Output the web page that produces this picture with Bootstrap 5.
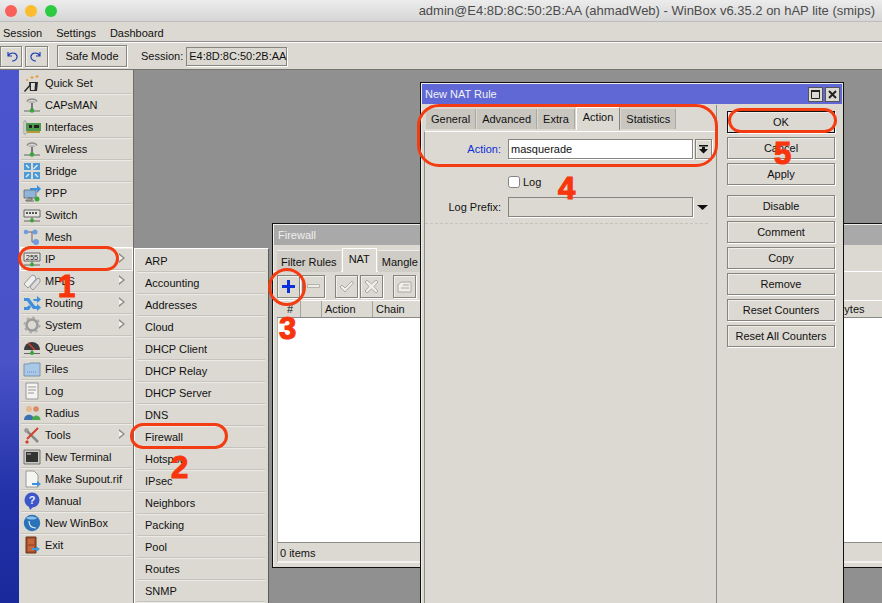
<!DOCTYPE html>
<html lang="en">
<head>
<meta charset="UTF-8">
<meta name="viewport" content="width=device-width, initial-scale=1.0">
<title>WinBox</title>
<link href="https://cdn.jsdelivr.net/npm/bootstrap@5.3.0/dist/css/bootstrap.min.css" rel="stylesheet">
<style>
html, body { height: 603px; overflow: hidden; }
body { width: 882px; background: #dcd9d2; color: #111; font: 11px/14px "Liberation Sans", Arial, sans-serif; position: relative; }

/* mac title bar */
.mac-bar { height: 22px; background: linear-gradient(#ececec, #d6d6d6); border-bottom: 1px solid #bdbdbd; padding: 0 7px 0 5px; }
.mac-dot { width: 12px; height: 12px; border-radius: 50%; margin-right: 8px; }
.mac-title { font-size: 13px; color: #4b4b4b; margin-left: auto; line-height: 21px; white-space: nowrap; }

/* winbox menu + toolbar */
.wb-menu { height: 19px; padding-left: 3px; gap: 14px; line-height: 22px; border-bottom: 1px solid #8e8e8e; box-sizing: content-box; }
.wb-tools { height: 28px; border-top: 1px solid #fff; border-bottom: 1px solid #77756f; }
.wb-btn { display: flex; align-items: center; justify-content: center; background: #dcd9d2; border: 1px solid #85847f; box-shadow: 1px 1px 0 #fff, inset 1px 1px 0 #efeee9; color: #111; font-size: 11px; line-height: 14px; padding: 0; border-radius: 0; }
.wb-btn:hover { background: #dcd9d2; border-color: #85847f; color: #111; }
.tool-undo { width: 22px; height: 21px; margin-left: 0; }
.tool-redo { width: 23px; height: 21px; margin-left: 3px; }
.tool-safe { width: 70px; height: 22px; margin-left: 9px; }
.sess-label { margin-left: 14px; margin-right: 3px; }
.sess-value { width: 101px; height: 19px; border: 1px solid #85847f; box-shadow: 1px 1px 0 #fff; padding-left: 2px; line-height: 17px; }

/* left side */
.wb-main { height: 533px; }
.wb-strip { width: 19px; background: linear-gradient(#4c54ce, #4a52c8 55%, #2231a8 80%, #1a2a9c); }
.wb-side { width: 115px; padding: 2px 1px 0 2px; border-right: 1px solid #6f6e6a; }
.wb-row { height: 22px; display: flex; align-items: center; background: transparent; border: 0; border-bottom: 1px solid #c6c3bc; box-shadow: 0 1px 0 #eceae5; padding: 0; position: relative; color: #111; font-size: 11px; border-radius: 0; }
.wb-row svg { width: 18px; height: 18px; margin: 0 4px 0 2px; flex: none; }
.row-on { outline: 1px solid #fff; outline-offset: 0; }
.sub-arrow { position: absolute; right: 7px; top: 5px; width: 0; height: 0; border-left: 6px solid #8b8a85; border-top: 5.5px solid transparent; border-bottom: 5.5px solid transparent; }
.sub-arrow::after { content: ""; position: absolute; left: -6px; top: -3.5px; width: 0; height: 0; border-left: 4px solid #f4f3ef; border-top: 3.5px solid transparent; border-bottom: 3.5px solid transparent; }
.wb-desk { background: #909090; position: relative; overflow: hidden; }

/* ip submenu */
.sub-menu { position: absolute; left: 0; top: 178px; width: 135px; height: 360px; background: #dcd9d2; border-top: 1px solid #fff; border-left: 1px solid #fff; border-right: 1px solid #5d5c58; padding: 1px 3px 0 2px; }
.sub-menu .wb-row { padding-left: 8px; }

/* windows */
.win { position: absolute; background: #dcd9d2; border: 1px solid #111; box-shadow: inset 1px 1px 0 #efeee9; }
.win-fw { left: 138px; top: 153px; width: 650px; height: 345px; }
.win-fw .win-title { height: 20px; margin: 1px; background: #a9a9a9; color: #efefef; padding-left: 4px; line-height: 20px; }
.fw-tabs { padding: 2px 0 0 4px; height: 25px; }
.fw-tab { height: 22px; margin-top: 2px; margin-right: 1px; padding: 0 4px; line-height: 23px; background: #cfccc5; border-top: 1px solid #eeede8; white-space: nowrap; }
.fw-tab.tab-on { height: 24px; margin-top: 0; background: #dcd9d2; border: 1px solid #fff; border-bottom: 0; padding: 0 6px; line-height: 21px; }
.fw-tool { padding: 3px 0 0 4px; height: 29px; border-top: 1px solid #fff; }
.fw-btn { width: 23px; height: 23px; margin-right: 2px; }
.fw-head { height: 18px; margin-left: 4px; border-top: 1px solid #fff; border-bottom: 1px solid #888; }
.fw-col { border-right: 1px solid #a5a39d; padding-left: 3px; line-height: 17px; flex: none; }
.fw-body { margin-left: 4px; height: 225px; background: #fff; border-left: 1px solid #b8b6b0; border-bottom: 1px solid #8e8d89; }
.fw-foot { margin-left: 4px; padding: 3px 2px; height: 20px; line-height: 14px; border-left: 1px solid #b8b6b0; border-bottom: 2px solid #f2f1ed; }

.win-nat { left: 286px; top: 12px; width: 424px; height: 540px; z-index: 2; }
.nat-title { height: 20px; margin: 1px; background: #5f68d4; color: #f2f2f2; padding-left: 3px; line-height: 21px; font-size: 11px; }
.nat-ctl { width: 15px; height: 15px; margin-right: 2px; background: #dcd9d2; border: 1px solid #555; display: flex; align-items: center; justify-content: center; }
.nat-left { width: 296px; padding: 2px 0 0 3px; border-right: 1px solid #8e8d89; }
.nat-tabs { padding-left: 2px; height: 24px; }
.nat-tab { height: 20px; margin-top: 2px; margin-right: 1px; padding: 0 5px; line-height: 21px; background: #c9c6bf; border-right: 1px solid #aaa8a2; white-space: nowrap; }
.nat-tab.tab-on { height: 23px; margin-top: 0; background: #dcd9d2; border: 1px solid #fff; border-right-color: #85847f; border-bottom: 0; padding: 0 6px; line-height: 19px; }
.nat-panel { border-top: 1px solid #fff; border-left: 1px solid #8e8d89; height: 500px; padding: 7px 0 0 0; }
.nat-line { height: 20px; align-items: center; }
.nat-label { width: 76px; text-align: right; margin-right: 7px; flex: none; }
.nat-field { width: 185px; height: 20px; background: #fff; border: 1px solid #85847f; box-shadow: 1px 1px 0 #fff; padding: 0 2px; line-height: 18px; font-size: 11px; }
.nat-off { background: #dcd9d2; }
.nat-drop { width: 17px; height: 20px; margin-left: 2px; }
.nat-check { width: 12px; height: 12px; margin: 0 3px 0 0; background: #fff; border: 1px solid #85847f; border-radius: 0; }
.nat-dash { border-top: 1px dashed #c4c2bb; margin: 6px 8px 0 0; }
.nat-right { width: 108px; margin-left: 10px; padding-top: 6px; gap: 4px; }
.nat-right .wb-btn { height: 22px; width: 108px; }
.btn-main { border: 1px solid #111 !important; }
.btn-gap { margin-top: 6px; }

/* red hand-drawn marks */
.mark-ring { position: absolute; border: 3px solid #f43c12; z-index: 5; pointer-events: none; }
.mark-num { position: absolute; z-index: 6; color: #f8360d; font: 900 31px/31px "Liberation Sans", Arial, sans-serif; -webkit-text-stroke: 1.2px #f8360d; }
</style>
</head>
<body>

<svg width="0" height="0" class="position-absolute">
  <symbol id="i-wand" viewBox="0 0 18 18"><path d="M1 17 8 9l1 1-7 8z" fill="#222"/><path d="M6 8h9l-1 9H7z" fill="#2b2b2b"/><path d="M8 9h4l-.5 7H8z" fill="#ddd"/><path d="M9 2v3M7.500 3.500h3M14 1v3M12.500 2.500h3M4 5v2M3 6h2" stroke="#e8962a" stroke-width="1"/></symbol>
  <symbol id="i-ant" viewBox="0 0 18 18"><path d="M4 5.500C5.500 2 12.500 2 14 5.500" fill="none" stroke="#8e8e8e" stroke-width="1.500"/><path d="M6 7c1-1.500 5-1.500 6 0" fill="none" stroke="#aaa" stroke-width="1.200"/><path d="M9 7v7" stroke="#777" stroke-width="2"/><path d="M1 15h16" stroke="#666"/><circle cx="9" cy="14.500" r="2.200" fill="#3aa63a"/></symbol>
  <symbol id="i-card" viewBox="0 0 18 18"><path d="M1 3h2v13H1z" fill="#eee" stroke="#888" stroke-width=".7"/><path d="M3 5h15v8H3z" fill="#4f9a4f"/><path d="M6 7h3v3H6zM11 7h5v3h-5z" fill="#222"/><path d="M4 13h13v2H4z" fill="#b89a3a"/></symbol>
  <symbol id="i-bridge" viewBox="0 0 18 18"><g fill="#4d9ad8"><path d="M1 1h7v7H1z"/><path d="M10 1h7v7h-7z"/><path d="M1 10h7v7H1z"/><path d="M10 10h7v7h-7z"/></g><g stroke="#e8f2fb" stroke-width="1.300" fill="none"><path d="M3 3l3 3M10.500 7l4-4M3 15l3-3M15 15l-3-3"/></g></symbol>
  <symbol id="i-ppp" viewBox="0 0 18 18"><path d="M1 6h12v8H1z" fill="#8fb6d9" stroke="#666" stroke-width=".8"/><path d="M5 14h4v2H3v1h8" stroke="#666" fill="none"/><path d="M7 4h7V1l4 4-4 4V6H7z" fill="#3f8fdc"/><circle cx="14" cy="15" r="2.500" fill="#3aa63a"/></symbol>
  <symbol id="i-switch" viewBox="0 0 18 18"><path d="M1 4h16v7H1z" fill="#e6e5e0" stroke="#666"/><path d="M3 6h2v2H3zM6 6h2v2H6zM9 6h2v2H9zM12 6h2v2h-2z" fill="#555"/><path d="M9 11v3M1 15h16" stroke="#666"/><circle cx="9" cy="14.500" r="2" fill="#3aa63a"/></symbol>
  <symbol id="i-mesh" viewBox="0 0 18 18"><path d="M3 4h9M9 4v10h3" stroke="#666" fill="none"/><circle cx="3" cy="4" r="2.300" fill="#6f9ce0"/><circle cx="12" cy="4" r="2.500" fill="#6f9ce0"/><circle cx="13" cy="14" r="3" fill="#6f9ce0"/></symbol>
  <symbol id="i-ip" viewBox="0 0 18 18"><path d="M1 3h16v8H1z" fill="#e6e5e0" stroke="#666"/><text x="9" y="10" font-size="7.500" text-anchor="middle" font-family="Liberation Sans" fill="#222">255</text><path d="M9 11v3M1 15h16" stroke="#666"/><circle cx="9" cy="14.500" r="2" fill="#3aa63a"/></symbol>
  <symbol id="i-tags" viewBox="0 0 18 18"><path d="M1 12 9 3l3 1 1 3-8 9z" fill="#eee" stroke="#999"/><path d="M7 15l8-9 2 1v3l-7 8z" fill="#ddd" stroke="#999"/></symbol>
  <symbol id="i-route" viewBox="0 0 18 18"><path d="M1 4h5l6 8h2v-2l4 3.500-4 3.500v-2h-4L4 7H1zM1 16v-3h3l2-2 2 2-2 3zM10 5h4V2l4 3.500L14 9V7h-3z" fill="#3f8fdc"/></symbol>
  <symbol id="i-gear" viewBox="0 0 18 18"><circle cx="9" cy="9" r="5.500" fill="none" stroke="#9a9a9a" stroke-width="2.500"/><circle cx="9" cy="9" r="7.500" fill="none" stroke="#aaa" stroke-width="2" stroke-dasharray="2.500 3.400"/></symbol>
  <symbol id="i-gauge" viewBox="0 0 18 18"><path d="M1 12a8 8 0 0 1 16 0z" fill="#3b3b3b"/><path d="M5 5l7 7" stroke="#e04030" stroke-width="1.200"/><path d="M9 12v3M1 15.500h16" stroke="#666"/><circle cx="9" cy="15" r="2" fill="#3aa63a"/></symbol>
  <symbol id="i-folder" viewBox="0 0 18 18"><path d="M1 4h5l1-1h10v13H1z" fill="#a7c8e6" stroke="#7b93a8"/><path d="M4 12h10" stroke="#7d82d8" stroke-dasharray="1 1"/></symbol>
  <symbol id="i-log" viewBox="0 0 18 18"><path d="M3 1h12v16H3z" fill="#f4f3ef" stroke="#999"/><path d="M5 5h8M5 8h8M5 11h6" stroke="#999"/></symbol>
  <symbol id="i-users" viewBox="0 0 18 18"><circle cx="6" cy="5" r="3" fill="#e8b890"/><path d="M1 16c0-7 10-7 10 0z" fill="#3f6fb0"/><circle cx="13" cy="5" r="2.800" fill="#d98a60"/><path d="M9 16c0-6 8.500-6 8.500 0z" fill="#4aa84a"/></symbol>
  <symbol id="i-tools" viewBox="0 0 18 18"><path d="M2 3l13 13" stroke="#888" stroke-width="2.500"/><path d="M15 2 4 13" stroke="#d44030" stroke-width="2"/><path d="M5 15l-2 2" stroke="#d44030" stroke-width="3"/><path d="M1 5l3-3 2 2-3 3z" fill="#999"/></symbol>
  <symbol id="i-term" viewBox="0 0 18 18"><path d="M1 2h16v14H1z" fill="#c9c8c3" stroke="#777"/><path d="M3 4h12v10H3z" fill="#333"/><path d="M4 6h4" stroke="#ccc"/></symbol>
  <symbol id="i-doc" viewBox="0 0 18 18"><path d="M3 1h8l4 4v12H3z" fill="#f5f5f2" stroke="#999"/><path d="M9 13h5v-2l4 3-4 3v-2H9z" fill="#3f8fdc"/></symbol>
  <symbol id="i-help" viewBox="0 0 18 18"><circle cx="9" cy="8" r="7.500" fill="#3c55c8"/><path d="M6 15l1 3 3-3z" fill="#3c55c8"/><text x="9" y="12" font-size="11" font-weight="700" text-anchor="middle" font-family="Liberation Sans" fill="#e8ecff">?</text></symbol>
  <symbol id="i-globe" viewBox="0 0 18 18"><circle cx="9" cy="9" r="8.200" fill="#2c72b8"/><path d="M3 4c3-2 8-2 11 0-2 2-8 2-11 0z" fill="#8cc0e8"/><path d="M6 7c0 5 3 7 7 7" fill="none" stroke="#dceaf6" stroke-width="1.200"/></symbol>
  <symbol id="i-door" viewBox="0 0 18 18"><path d="M3 1h10v16H3z" fill="#a8512e" stroke="#6e3016"/><path d="M5 3h6v5H5zM5 10h6v5H5z" fill="#c4673c"/><path d="M9 12h4v-2l4 3-4 3v-2H9z" fill="#3f9be0"/></symbol>
</svg>

<div class="mac-bar d-flex align-items-center">
  <span class="mac-dot" style="background:#f9605a"></span>
  <span class="mac-dot" style="background:#fbbc2e"></span>
  <span class="mac-dot" style="background:#2ccb41"></span>
  <span class="mac-title">admin@E4:8D:8C:50:2B:AA (ahmadWeb) - WinBox v6.35.2 on hAP lite (smips)</span>
</div>

<div class="wb-menu d-flex">
  <span>Session</span><span>Settings</span><span>Dashboard</span>
</div>

<div class="wb-tools d-flex align-items-center">
  <button class="btn wb-btn tool-undo"><svg width="13" height="12" viewBox="0 0 13 12"><path d="M3 2v4h4M3 6c2-4 8-4 9 0 .5 3-2 5-5 5" fill="none" stroke="#1d3fb0" stroke-width="1.200"/></svg></button>
  <button class="btn wb-btn tool-redo"><svg width="13" height="12" viewBox="0 0 13 12"><path d="M10 2v4H6M10 6C8 2 2 2 1 6c-.5 3 2 5 5 5" fill="none" stroke="#1d3fb0" stroke-width="1.200"/></svg></button>
  <button class="btn wb-btn tool-safe">Safe Mode</button>
  <span class="sess-label">Session:</span>
  <span class="sess-value">E4:8D:8C:50:2B:AA</span>
</div>

<div class="wb-main d-flex">
  <div class="wb-strip flex-shrink-0"></div>
  <div class="wb-side flex-shrink-0">
    <div class="list-group list-group-flush">
      <div class="wb-row"><svg><use href="#i-wand"/></svg>Quick Set</div>
      <div class="wb-row"><svg><use href="#i-ant"/></svg>CAPsMAN</div>
      <div class="wb-row"><svg><use href="#i-card"/></svg>Interfaces</div>
      <div class="wb-row"><svg><use href="#i-ant"/></svg>Wireless</div>
      <div class="wb-row"><svg><use href="#i-bridge"/></svg>Bridge</div>
      <div class="wb-row"><svg><use href="#i-ppp"/></svg>PPP</div>
      <div class="wb-row"><svg><use href="#i-switch"/></svg>Switch</div>
      <div class="wb-row"><svg><use href="#i-mesh"/></svg>Mesh</div>
      <div class="wb-row row-on"><svg><use href="#i-ip"/></svg>IP<span class="sub-arrow"></span></div>
      <div class="wb-row"><svg><use href="#i-tags"/></svg>MPLS<span class="sub-arrow"></span></div>
      <div class="wb-row"><svg><use href="#i-route"/></svg>Routing<span class="sub-arrow"></span></div>
      <div class="wb-row"><svg><use href="#i-gear"/></svg>System<span class="sub-arrow"></span></div>
      <div class="wb-row"><svg><use href="#i-gauge"/></svg>Queues</div>
      <div class="wb-row"><svg><use href="#i-folder"/></svg>Files</div>
      <div class="wb-row"><svg><use href="#i-log"/></svg>Log</div>
      <div class="wb-row"><svg><use href="#i-users"/></svg>Radius</div>
      <div class="wb-row"><svg><use href="#i-tools"/></svg>Tools<span class="sub-arrow"></span></div>
      <div class="wb-row"><svg><use href="#i-term"/></svg>New Terminal</div>
      <div class="wb-row"><svg><use href="#i-doc"/></svg>Make Supout.rif</div>
      <div class="wb-row"><svg><use href="#i-help"/></svg>Manual</div>
      <div class="wb-row"><svg><use href="#i-globe"/></svg>New WinBox</div>
      <div class="wb-row"><svg><use href="#i-door"/></svg>Exit</div>
    </div>
  </div>

  <div class="wb-desk flex-grow-1">
    <div class="sub-menu">
      <div class="wb-row">ARP</div>
      <div class="wb-row">Accounting</div>
      <div class="wb-row">Addresses</div>
      <div class="wb-row">Cloud</div>
      <div class="wb-row">DHCP Client</div>
      <div class="wb-row">DHCP Relay</div>
      <div class="wb-row">DHCP Server</div>
      <div class="wb-row">DNS</div>
      <div class="wb-row">Firewall</div>
      <div class="wb-row">Hotspot</div>
      <div class="wb-row">IPsec</div>
      <div class="wb-row">Neighbors</div>
      <div class="wb-row">Packing</div>
      <div class="wb-row">Pool</div>
      <div class="wb-row">Routes</div>
      <div class="wb-row">SNMP</div>
    </div>

    <div class="win win-fw">
      <div class="win-title">Firewall</div>
      <div class="fw-tabs d-flex">
        <span class="fw-tab">Filter Rules</span>
        <span class="fw-tab tab-on">NAT</span>
        <span class="fw-tab">Mangle</span>
      </div>
      <div class="fw-tool d-flex">
        <button class="btn wb-btn fw-btn"><svg width="13" height="13" viewBox="0 0 13 13"><path d="M5 0h3v5h5v3H8v5H5V8H0V5h5z" fill="#0a30d8"/></svg></button>
        <button class="btn wb-btn fw-btn"><svg width="13" height="5" viewBox="0 0 13 5"><path d="M.5.500h12v3H.5z" fill="#eeede8" stroke="#b5b3ad"/></svg></button>
        <button class="btn wb-btn fw-btn ms-2"><svg width="15" height="13" viewBox="0 0 15 13"><path d="M1 7l2-2 3 3 7-7 1.500 2L6 12z" fill="#eeede8" stroke="#aaa8a2"/></svg></button>
        <button class="btn wb-btn fw-btn"><svg width="13" height="13" viewBox="0 0 13 13"><path d="M2 0l4.500 4L11 0l2 2-4 4.500L13 11l-2 2-4.500-4L2 13l-2-2 4-4.500L0 2z" fill="#eeede8" stroke="#aaa8a2"/></svg></button>
        <button class="btn wb-btn fw-btn ms-2"><svg width="15" height="12" viewBox="0 0 15 12"><path d="M1 4l3-3h10v10H1zM6 4h6M4 7h8" fill="#eeede8" stroke="#aaa8a2"/></svg></button>
      </div>
      <div class="fw-head d-flex">
        <span class="fw-col text-center" style="width:24px">#</span>
        <span class="fw-col" style="width:21px"></span>
        <span class="fw-col" style="width:51px">Action</span>
        <span class="fw-col" style="width:461px">Chain</span>
        <span class="fw-col" style="width:60px">Bytes</span>
      </div>
      <div class="fw-body"></div>
      <div class="fw-foot">0 items</div>
    </div>

    <div class="win win-nat">
      <div class="nat-title d-flex align-items-center">
        <span class="me-auto">New NAT Rule</span>
        <span class="nat-ctl"><svg width="9" height="9" viewBox="0 0 9 9"><path d="M.5 1.500h8v7h-8z" fill="none" stroke="#222"/><path d="M0 1h9" stroke="#222" stroke-width="2"/></svg></span>
        <span class="nat-ctl"><svg width="9" height="9" viewBox="0 0 9 9"><path d="M1 1l7 7M8 1 1 8" stroke="#222" stroke-width="2"/></svg></span>
      </div>
      <div class="d-flex">
        <div class="nat-left">
          <div class="nat-tabs d-flex">
            <span class="nat-tab">General</span>
            <span class="nat-tab">Advanced</span>
            <span class="nat-tab">Extra</span>
            <span class="nat-tab tab-on">Action</span>
            <span class="nat-tab">Statistics</span>
          </div>
          <div class="nat-panel">
            <div class="nat-line d-flex">
              <label class="nat-label" style="color:#0a30d8">Action:</label>
              <span class="nat-field">masquerade</span>
              <button class="btn wb-btn nat-drop"><svg width="9" height="9" viewBox="0 0 9 9"><path d="M0 0h9v1.500H0zM3 2h3v2h3L4.500 8.500 0 4h3z" fill="#111"/></svg></button>
            </div>
            <div class="d-flex align-items-center mt-3">
              <span class="nat-label"></span>
              <input class="form-check-input nat-check" type="checkbox"><span>Log</span>
            </div>
            <div class="nat-line d-flex mt-2">
              <label class="nat-label">Log Prefix:</label>
              <span class="nat-field nat-off"></span>
              <svg class="ms-1" width="11" height="5" viewBox="0 0 11 5"><path d="M0 0h11L5.500 5z" fill="#111"/></svg>
            </div>
            <div class="nat-dash"></div>
          </div>
        </div>
        <div class="nat-right d-flex flex-column">
          <button class="btn wb-btn btn-main">OK</button>
          <button class="btn wb-btn">Cancel</button>
          <button class="btn wb-btn">Apply</button>
          <button class="btn wb-btn btn-gap">Disable</button>
          <button class="btn wb-btn">Comment</button>
          <button class="btn wb-btn">Copy</button>
          <button class="btn wb-btn">Remove</button>
          <button class="btn wb-btn">Reset Counters</button>
          <button class="btn wb-btn">Reset All Counters</button>
        </div>
      </div>
    </div>
  </div>
</div>

<!-- hand drawn annotations over the screenshot -->
<div class="mark-ring" style="left:18px;top:246px;width:101px;height:25px;border-radius:13px"></div>
<div class="mark-ring" style="left:130px;top:423px;width:98px;height:26px;border-radius:13px"></div>
<div class="mark-ring" style="left:268px;top:268px;width:38px;height:38px;border-radius:50%"></div>
<div class="mark-ring" style="left:417px;top:104px;width:301px;height:63px;border-radius:22px"></div>
<div class="mark-ring" style="left:728px;top:108px;width:109px;height:25px;border-radius:13px"></div>
<span class="mark-num" style="left:58px;top:271px">1</span>
<span class="mark-num" style="left:171px;top:452px">2</span>
<span class="mark-num" style="left:279px;top:313px">3</span>
<span class="mark-num" style="left:558px;top:173px">4</span>
<span class="mark-num" style="left:774px;top:138px">5</span>

</body>
</html>
